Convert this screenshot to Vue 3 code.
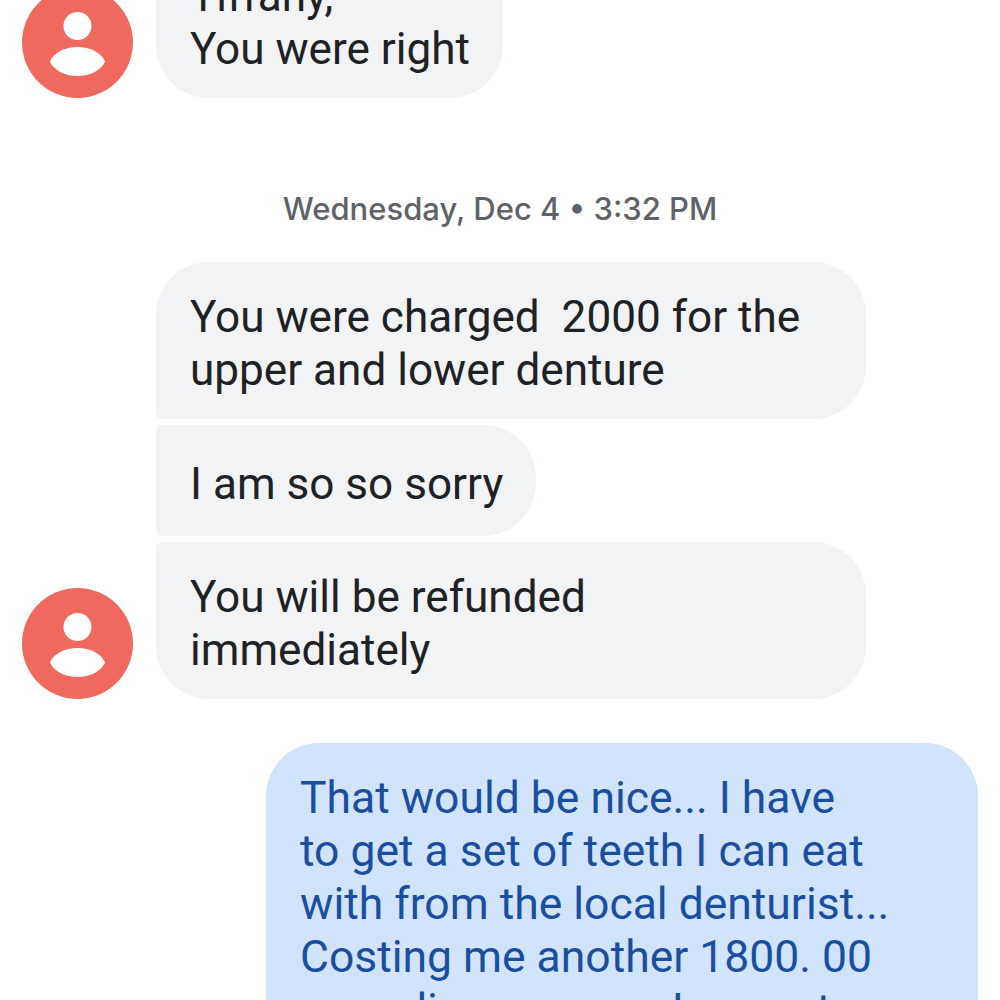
<script setup>
const groups = [
  { id: 1, clipped: true, bubbles: [{ lines: ['Tiffany,', 'You were right'], wide: false }] },
  {
    id: 2,
    stamp: 'Wednesday, Dec 4 • 3:32 PM',
    bubbles: [
      { lines: ['You were charged  2000 for the', 'upper and lower denture'], wide: true },
      { lines: ['I am so so sorry'], wide: false },
      { lines: ['You will be refunded', 'immediately'], wide: true }
    ]
  }
]
const sent = ['That would be nice... I have', 'to get a set of teeth I can eat', 'with from the local denturist...', 'Costing me another 1800. 00', 'regarding an error. I cannot']
</script>

<template>
  <div class="page">
    <div class="thread">
      <template v-for="group in groups" :key="group.id">
        <div v-if="group.stamp" class="stamp">{{ group.stamp }}</div>
        <div class="group" :class="{ first: group.clipped }">
          <div class="avatar">
            <svg viewBox="0 0 111 111" width="111" height="111">
              <circle cx="55.5" cy="55.5" r="55.5" fill="#f0695e" />
              <circle cx="55.5" cy="39" r="14" fill="#fff" />
              <path d="M28 74.5C31 66 43 60 55.5 60S80 66 83 74.5C80 83 68 89 55.5 89S31 83 28 74.5Z" fill="#fff" />
            </svg>
          </div>
          <div class="bubbles">
            <div
              v-for="(bubble, i) in group.bubbles"
              :key="i"
              class="bubble"
              :class="{
                wide: bubble.wide,
                top: i === 0 && group.bubbles.length > 1,
                mid: i > 0 && i < group.bubbles.length - 1,
                last: i > 0 && i === group.bubbles.length - 1
              }"
            >
              <div v-for="line in bubble.lines" :key="line" class="line">{{ line }}</div>
            </div>
          </div>
        </div>
      </template>
      <div class="bubble sent">
        <div v-for="line in sent" :key="line" class="line">{{ line }}</div>
      </div>
    </div>
  </div>
</template>

<style scoped>
.page {
  width: 1000px;
  height: 1000px;
  overflow: hidden;
  background: #fff;
  font-family: Roboto, "Liberation Sans", sans-serif;
}
.thread {
  display: flex;
  flex-direction: column;
  padding: 0 22px;
}
.group {
  display: flex;
  align-items: flex-end;
  gap: 23px;
}
.group.first {
  margin-top: -59px;
}
.avatar {
  width: 111px;
  height: 111px;
  flex: none;
}
.avatar svg {
  display: block;
}
.bubbles {
  display: flex;
  flex-direction: column;
  align-items: flex-start;
  gap: 6px;
}
.bubble {
  min-height: 111px;
  padding: 29px 33px 22px 34px;
  box-sizing: border-box;
  display: flex;
  flex-direction: column;
  justify-content: center;
  background: #f1f3f4;
  color: #202124;
  border-radius: 53px;
  font-size: 44.1px;
  line-height: 53px;
  white-space: pre;
}
.bubble.wide {
  width: 710px;
}
.bubble.top {
  border-bottom-left-radius: 6px;
}
.bubble.mid {
  border-top-left-radius: 6px;
  border-bottom-left-radius: 6px;
}
.bubble.last {
  border-top-left-radius: 6px;
}
.stamp {
  margin: 91px 0 33px;
  text-align: center;
  font-family: Inter, Roboto, sans-serif;
  font-size: 31px;
  line-height: 40px;
  font-weight: 500;
  color: #5f6368;
}
.sent {
  align-self: flex-end;
  width: 712px;
  margin-top: 44px;
  padding-top: 29px;
  background: #d2e3fc;
  color: #1a4f9f;
  font-size: 44.45px;
}
</style>
